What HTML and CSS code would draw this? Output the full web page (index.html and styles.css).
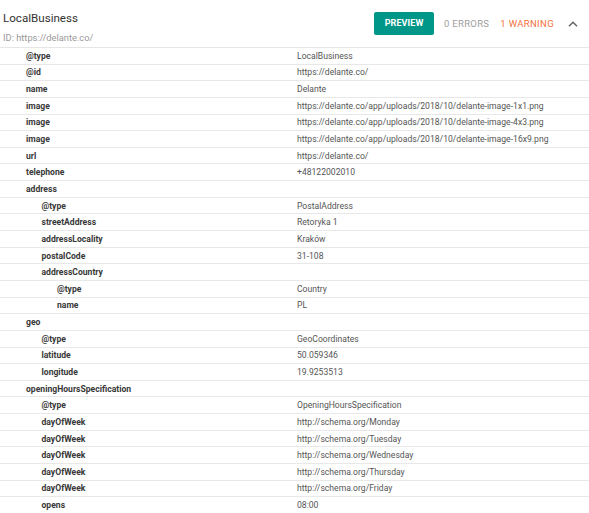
FILE: index.html
```html
<!DOCTYPE html>
<html>
<head>
<meta charset="utf-8">
<link rel="stylesheet" href="styles.css">
</head>
<body>
<div class="card">
  <div class="header">
    <div class="titles">
      <div class="title">LocalBusiness</div>
      <div class="id">ID: https://delante.co/</div>
    </div>
    <div class="actions">
      <button class="preview">PREVIEW</button>
      <span class="errors">0 ERRORS</span>
      <span class="warning">1 WARNING</span>
      <svg class="chev" width="10" height="6" viewBox="0 0 10 6"><path d="M1 5.2 L5 1.2 L9 5.2" fill="none" stroke="#666" stroke-width="1.5"/></svg>
    </div>
  </div>
  <div class="rows">
    <div class="row l1"><span class="k">@type</span><span class="v">LocalBusiness</span></div>
    <div class="row l1"><span class="k">@id</span><span class="v">https://delante.co/</span></div>
    <div class="row l1"><span class="k">name</span><span class="v">Delante</span></div>
    <div class="row l1"><span class="k">image</span><span class="v">https://delante.co/app/uploads/2018/10/delante-image-1x1.png</span></div>
    <div class="row l1"><span class="k">image</span><span class="v">https://delante.co/app/uploads/2018/10/delante-image-4x3.png</span></div>
    <div class="row l1"><span class="k">image</span><span class="v">https://delante.co/app/uploads/2018/10/delante-image-16x9.png</span></div>
    <div class="row l1"><span class="k">url</span><span class="v">https://delante.co/</span></div>
    <div class="row l1"><span class="k">telephone</span><span class="v">+48122002010</span></div>
    <div class="row l1"><span class="k">address</span><span class="v"></span></div>
    <div class="row l2"><span class="k">@type</span><span class="v">PostalAddress</span></div>
    <div class="row l2"><span class="k">streetAddress</span><span class="v">Retoryka 1</span></div>
    <div class="row l2"><span class="k">addressLocality</span><span class="v">Kraków</span></div>
    <div class="row l2"><span class="k">postalCode</span><span class="v">31-108</span></div>
    <div class="row l2"><span class="k">addressCountry</span><span class="v"></span></div>
    <div class="row l3"><span class="k">@type</span><span class="v">Country</span></div>
    <div class="row l3"><span class="k">name</span><span class="v">PL</span></div>
    <div class="row l1"><span class="k">geo</span><span class="v"></span></div>
    <div class="row l2"><span class="k">@type</span><span class="v">GeoCoordinates</span></div>
    <div class="row l2"><span class="k">latitude</span><span class="v">50.059346</span></div>
    <div class="row l2"><span class="k">longitude</span><span class="v">19.9253513</span></div>
    <div class="row l1"><span class="k">openingHoursSpecification</span><span class="v"></span></div>
    <div class="row l2"><span class="k">@type</span><span class="v">OpeningHoursSpecification</span></div>
    <div class="row l2"><span class="k">dayOfWeek</span><span class="v">http://schema.org/Monday</span></div>
    <div class="row l2"><span class="k">dayOfWeek</span><span class="v">http://schema.org/Tuesday</span></div>
    <div class="row l2"><span class="k">dayOfWeek</span><span class="v">http://schema.org/Wednesday</span></div>
    <div class="row l2"><span class="k">dayOfWeek</span><span class="v">http://schema.org/Thursday</span></div>
    <div class="row l2"><span class="k">dayOfWeek</span><span class="v">http://schema.org/Friday</span></div>
    <div class="row l2"><span class="k">opens</span><span class="v">08:00</span></div>
  </div>
</div>
</body>
</html>
```
FILE: styles.css
```css
html, body { margin: 0; padding: 0; background: #fff; }
body { font-family: Roboto, "Liberation Sans", sans-serif; color: #333; }
.card { width: 589px; }
.header {
  height: 47px;
  border-bottom: 1px solid #e6e6e6;
  display: flex;
  justify-content: space-between;
}
.titles { padding-left: 3px; }
.title { font-size: 11.6px; color: #333; margin-top: 11px; line-height: 14px; }
.id { font-size: 9.3px; color: #999; margin-top: 7px; line-height: 12px; }
.actions { display: flex; align-items: center; height: 47px; }
.preview {
  background: #009688; color: #fff; border: none; border-radius: 2px;
  width: 60px; height: 23px;
  font-family: inherit; font-weight: 700; font-size: 9px; letter-spacing: 0.1px;
  padding: 0; position: relative; top: -0.5px; left: 1px;
}
.errors { margin-left: 11px; font-size: 9.5px; color: #9e9e9e; letter-spacing: 0.3px; }
.warning { margin-left: 11px; font-size: 9.5px; color: #f4713c; letter-spacing: 0.35px; }
.chev { margin-left: 14px; margin-right: 11px; }
.row {
  height: 15.65px;
  border-bottom: 1px solid #e8e8e8;
  display: flex; align-items: center;
  font-size: 8.6px;
}
.k { width: 297px; box-sizing: border-box; font-weight: 700; color: #383838; }
.l1 .k { padding-left: 26px; }
.l2 .k { padding-left: 41.5px; }
.l3 .k { padding-left: 57px; }
.v { color: #555; }
```
